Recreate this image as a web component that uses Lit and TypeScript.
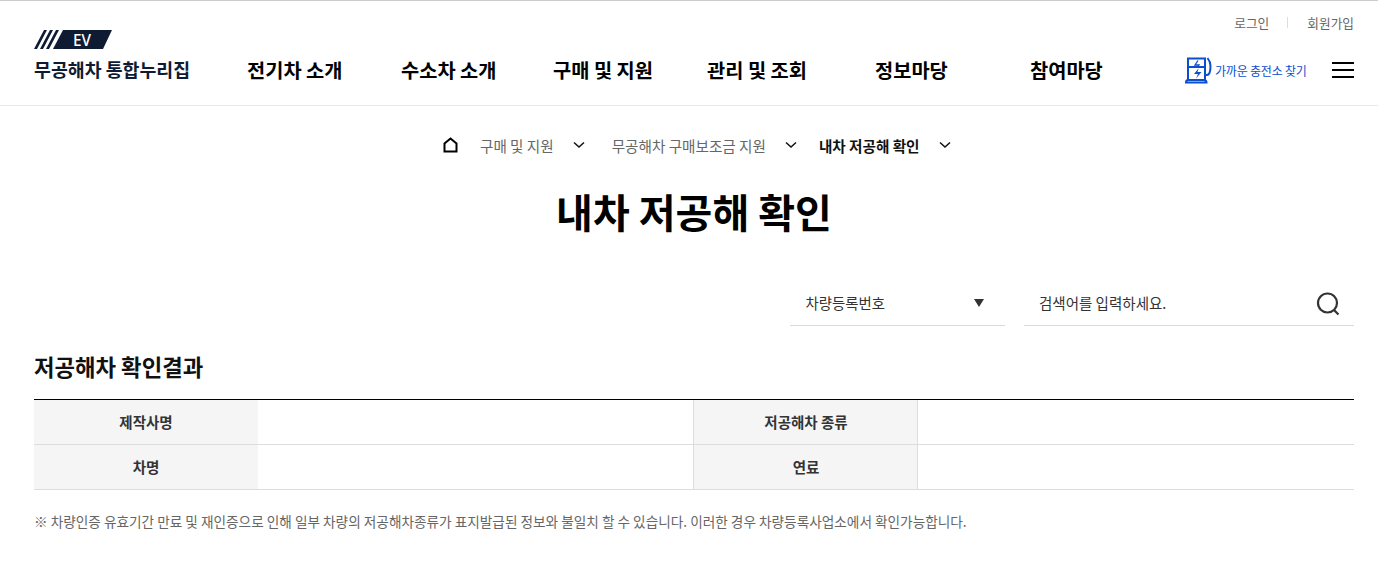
import { LitElement, html, css } from "lit";
import { customElement } from "lit/decorators.js";

const chev = html`<svg class="chev" width="12" height="8" viewBox="0 0 12 8"><path d="M1 1.5 6 6l5-4.500" fill="none" stroke="#111" stroke-width="1.500"/></svg>`;

@customElement("app-root")
export class AppRoot extends LitElement {
  static styles = css`
    :host { display: block; font-family: "Noto Sans CJK KR", "Noto Sans", sans-serif; color: #111; background: #fff; height: 567px; overflow: hidden; }
    * { box-sizing: border-box; }
    header { height: 106px; border-top: 1px solid #ccc; border-bottom: 1px solid #eaeaea; padding: 0 24px 0 34px; display: flex; flex-direction: column; }
    .util { height: 55px; display: flex; justify-content: flex-end; align-items: center; align-self: stretch; font-size: 12.7px; line-height: 18px; color: #666; padding-bottom: 12px; }
    .util i { width: 1px; height: 11px; background: #ddd; margin: 0 19px 0 18px; }
    .main { display: flex; align-items: flex-start; }
    .logo { width: 194px; display: flex; flex-direction: column; margin-top: -26px; }
    .logo svg { display: block; }
    .logo b { font-size: 18.35px; line-height: 26px; font-weight: 700; color: #0f1b33; margin-top: 7px; white-space: nowrap; }
    nav { display: flex; font-size: 19.8px; font-weight: 700; color: #000; line-height: 28px; height: 28px; }
    nav span { white-space: nowrap; }
    .n1 { margin-left: 19px; width: 154px; }
    .n2 { width: 152px; }
    .n3 { width: 154px; }
    .n4 { width: 168px; }
    .n5 { width: 155px; }
    .n6 { width: 155px; }
    .find { display: flex; align-items: center; gap: 3px; font-size: 12px; color: #0b4fd0; letter-spacing: -0.2px; height: 28px; white-space: nowrap; }
    .burger { margin-left: 25px; margin-top: 6px; width: 22px; height: 16px; display: flex; flex-direction: column; justify-content: space-between; }
    .burger i { display: block; height: 2px; background: #000; }
    .crumbs { display: flex; align-items: center; height: 20px; margin-top: 29px; font-size: 14.6px; color: #666; padding-left: 443px; white-space: nowrap; }
    .crumbs b { color: #111; font-weight: 700; }
    .home { margin-right: 22px; }
    .c1 { margin-right: 19px; }
    .c2 { margin-left: 27px; margin-right: 19px; }
    .c3 { margin-left: 22px; margin-right: 19px; }
    h1 { margin: 28px 0 0; padding-left: 10px; text-align: center; font-size: 40px; line-height: 56px; font-weight: 700; color: #000; height: 56px; }
    .search { display: flex; justify-content: flex-end; margin: 41px 24px 0 0; gap: 19px; font-size: 14.5px; color: #333; }
    .sel { width: 215px; height: 46px; border-bottom: 1px solid #d9d9d9; padding: 0 21px 0 16px; display: flex; align-items: center; justify-content: space-between; }
    .sel span:first-child { font-size: 14.4px; margin-left: -0.500px; }
    .tri { width: 0; height: 0; border-left: 5px solid transparent; border-right: 5px solid transparent; border-top: 8px solid #333; }
    .inp { width: 330px; height: 46px; border-bottom: 1px solid #d9d9d9; padding: 0 14px 0 15px; display: flex; align-items: center; justify-content: space-between; }
    .inp svg { margin-top: 3px; }
    h2 { margin: 23px 0 0 34px; font-size: 22.3px; line-height: 34px; font-weight: 700; color: #111; }
    .tbl { margin: 16px 24px 0 34px; width: 1320px; border-top: 1px solid #000; }
    table { width: 100%; border-collapse: collapse; table-layout: fixed; font-size: 14.5px; }
    th { width: 224px; background: #f5f5f5; font-weight: 700; color: #333; text-align: center; padding: 0; }
    tr:first-child th { padding-bottom: 1px; }
    th.left { padding-left: 2px; }
    td { padding: 0; }
    .td1 { width: 435px; }
    tr { height: 45px; border-bottom: 1px solid #ddd; }
    tr:first-child { height: 44px; }
    .left { border-left: 1px solid #ddd; }
    .note { margin: 20px 0 0 34px; font-size: 13.65px; color: #666; line-height: 22px; white-space: nowrap; }
  `;

  render() {
    return html`
      <header>
        <div class="util"><span>로그인</span><i></i><span>회원가입</span></div>
        <div class="main">
          <div class="logo">
            <svg width="78" height="19" viewBox="0 0 78 19" fill="#0f1b33">
              <path d="M0 19 10 0h3L3 19zM6 19 16 0h3L9 19zM12 19 22 0h3l-10 19z"/>
              <path d="M19 19 29 0h49l-9 19z"/>
              <text x="48" y="15.500" text-anchor="middle" fill="#fff" font-size="16" font-weight="500" font-family="Noto Sans, sans-serif" textLength="18" lengthAdjust="spacingAndGlyphs">EV</text>
            </svg>
            <b>무공해차 통합누리집</b>
          </div>
          <nav>
            <span class="n1">전기차 소개</span><span class="n2">수소차 소개</span><span class="n3">구매 및 지원</span><span class="n4">관리 및 조회</span><span class="n5">정보마당</span><span class="n6">참여마당</span>
          </nav>
          <div class="find">
            <svg width="27" height="28" viewBox="0 0 27 28" fill="none" stroke="#0b4fd0" stroke-width="2">
              <path d="M3 24V2.500h17V24M3 11h17M1 26.500c0-1.500 1-2.500 2-2.500h16c1.500 0 2.500 1 2.500 2.500zM20 19h2c1.500 0 2-1 2.500-2 1-2 1-4 1-7 0-3-1-5.500-3-8"/>
              <path d="M13 4.500 10 9h4l-1 1.500" stroke-width="1.300"/>
              <path d="M13.500 12.500 9 18h4l-2 4.500 5.500-6.500h-4z" fill="#0b4fd0" stroke="none"/>
            </svg>
            <span>가까운 충전소 찾기</span>
          </div>
          <div class="burger"><i></i><i></i><i></i></div>
        </div>
      </header>
      <div class="crumbs">
        <svg class="home" width="15" height="16" viewBox="0 0 15 16" fill="none" stroke="#000" stroke-width="2"><path d="M1.500 14.500V6.500L7.500 1.500l6 5v8z"/></svg>
        <span class="c1">구매 및 지원</span>${chev}
        <span class="c2">무공해차 구매보조금 지원</span>${chev}
        <b class="c3">내차 저공해 확인</b>${chev}
      </div>
      <h1>내차 저공해 확인</h1>
      <div class="search">
        <div class="sel"><span>차량등록번호</span><span class="tri"></span></div>
        <div class="inp"><span>검색어를 입력하세요.</span>
          <svg width="24" height="24" viewBox="0 0 24 24" fill="none" stroke="#333" stroke-width="2.200"><circle cx="11.500" cy="11" r="9.500"/><path d="M18 18 22.500 22.500"/></svg>
        </div>
      </div>
      <h2>저공해차 확인결과</h2>
      <div class="tbl">
        <table>
          <tr><th>제작사명</th><td class="td1"></td><th class="left">저공해차 종류</th><td class="left"></td></tr>
          <tr><th>차명</th><td class="td1"></td><th class="left">연료</th><td class="left"></td></tr>
        </table>
      </div>
      <div class="note">※ 차량인증 유효기간 만료 및 재인증으로 인해 일부 차량의 저공해차종류가 표지발급된 정보와 불일치 할 수 있습니다. 이러한 경우 차량등록사업소에서 확인가능합니다.</div>
    `;
  }
}
